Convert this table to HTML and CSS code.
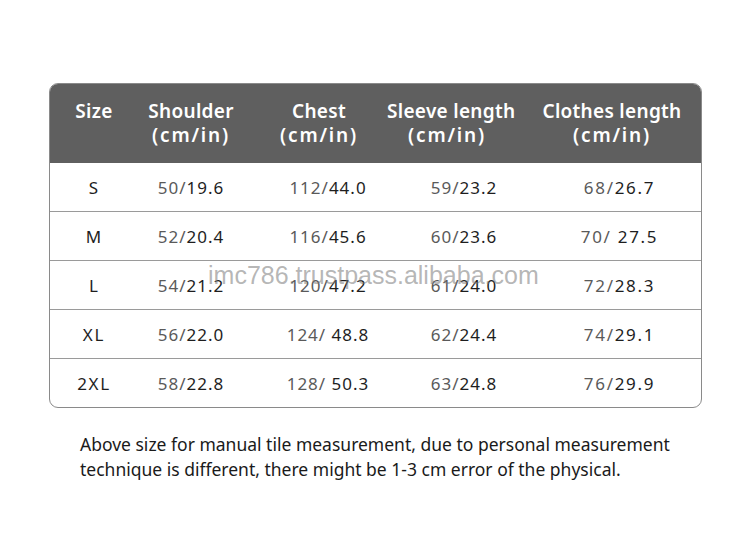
FILE: index.html
```html
<!DOCTYPE html>
<html>
<head>
<meta charset="utf-8">
<link rel="stylesheet" href="styles.css">
</head>
<body>
<div class="page">
  <div class="table">
    <div class="row head">
      <div class="c c1">Size</div>
      <div class="c c2">Shoulder<br><span class="u">(cm/in)</span></div>
      <div class="c c3">Chest<br><span class="u">(cm/in)</span></div>
      <div class="c c4">Sleeve length<br><span class="u">(cm/in)</span></div>
      <div class="c c5">Clothes length<br><span class="u">(cm/in)</span></div>
    </div>
    <div class="row">
      <div class="c c1">S</div>
      <div class="c c2"><span class="l">50/</span>19.6</div>
      <div class="c c3"><span class="l">112/</span>44.0</div>
      <div class="c c4"><span class="l">59/</span>23.2</div>
      <div class="c c5 sp"><span class="l">68/</span>26.7</div>
    </div>
    <div class="row">
      <div class="c c1">M</div>
      <div class="c c2"><span class="l">52/</span>20.4</div>
      <div class="c c3"><span class="l">116/</span>45.6</div>
      <div class="c c4"><span class="l">60/</span>23.6</div>
      <div class="c c5 sp"><span class="l">70/</span> 27.5</div>
    </div>
    <div class="row">
      <div class="c c1">L</div>
      <div class="c c2"><span class="l">54/</span>21.2</div>
      <div class="c c3"><span class="l">120/</span>47.2</div>
      <div class="c c4"><span class="l">61/</span>24.0</div>
      <div class="c c5 sp"><span class="l">72/</span>28.3</div>
    </div>
    <div class="row">
      <div class="c c1 sp">XL</div>
      <div class="c c2"><span class="l">56/</span>22.0</div>
      <div class="c c3"><span class="l">124/</span> 48.8</div>
      <div class="c c4"><span class="l">62/</span>24.4</div>
      <div class="c c5 sp"><span class="l">74/</span>29.1</div>
    </div>
    <div class="row last">
      <div class="c c1 sp">2XL</div>
      <div class="c c2"><span class="l">58/</span>22.8</div>
      <div class="c c3"><span class="l">128/</span> 50.3</div>
      <div class="c c4"><span class="l">63/</span>24.8</div>
      <div class="c c5 sp"><span class="l">76/</span>29.9</div>
    </div>
    <div class="wm">imc786.trustpass.alibaba.com</div>
  </div>
  <p class="note">Above size for manual tile measurement, due to personal measurement technique is different, there might be 1-3 cm error of the physical.</p>
</div>
</body>
</html>
```

FILE: styles.css
```css
html, body {
  margin: 0;
  padding: 0;
  background: #ffffff;
}
body {
  width: 750px;
  height: 553px;
  overflow: hidden;
  font-family: "Noto Sans", "Open Sans", sans-serif;
}
.page {
  padding: 83px 48px 0 49px;
}
.table {
  position: relative;
  border: 1px solid #8a8a8a;
  border-radius: 9px;
  overflow: hidden;
  width: 651px;
}
.row {
  display: grid;
  grid-template-columns: 88px 106px 150px 120px 1fr;
  height: 49px;
  align-items: center;
  border-bottom: 1px solid #9a9a9a;
  box-sizing: border-box;
}
.row.last {
  border-bottom: none;
  height: 48px;
}
.row.head {
  background: #5f5f5f;
  height: 79px;
  border-bottom: none;
  color: #ffffff;
}
.c {
  text-align: center;
  font-size: 17px;
  letter-spacing: 1px;
  color: #1e1e1e;
  white-space: nowrap;
}
.head .c {
  color: #ffffff;
  font-weight: 600;
  font-size: 19px;
  line-height: 24px;
  letter-spacing: 0.3px;
  padding-bottom: 2px;
}
.head .u {
  letter-spacing: 1.8px;
}
.head .c1 { align-self: start; padding-top: 15px; }
.head .c4 { margin-left: -7px; margin-right: 7px; }
.head .c5 { padding-left: 9px; }
.row:not(.head) .c3 { padding-left: 18px; }
.row:not(.head) .c4 { padding-left: 20px; }
.row:not(.head) .c5 { padding-left: 24px; }
.l { color: #5a5a5a; }
.c.sp { letter-spacing: 1.7px; }
.wm {
  position: absolute;
  left: 158px;
  top: 177px;
  font-family: "Liberation Sans", Arial, sans-serif;
  font-size: 25px;
  letter-spacing: 0;
  color: rgba(120, 120, 120, 0.55);
  white-space: nowrap;
  pointer-events: none;
}
.note {
  margin: 24px 0 0 31px;
  font-size: 17.5px;
  line-height: 25px;
  color: #1a1a1a;
  width: 620px;
}
```
